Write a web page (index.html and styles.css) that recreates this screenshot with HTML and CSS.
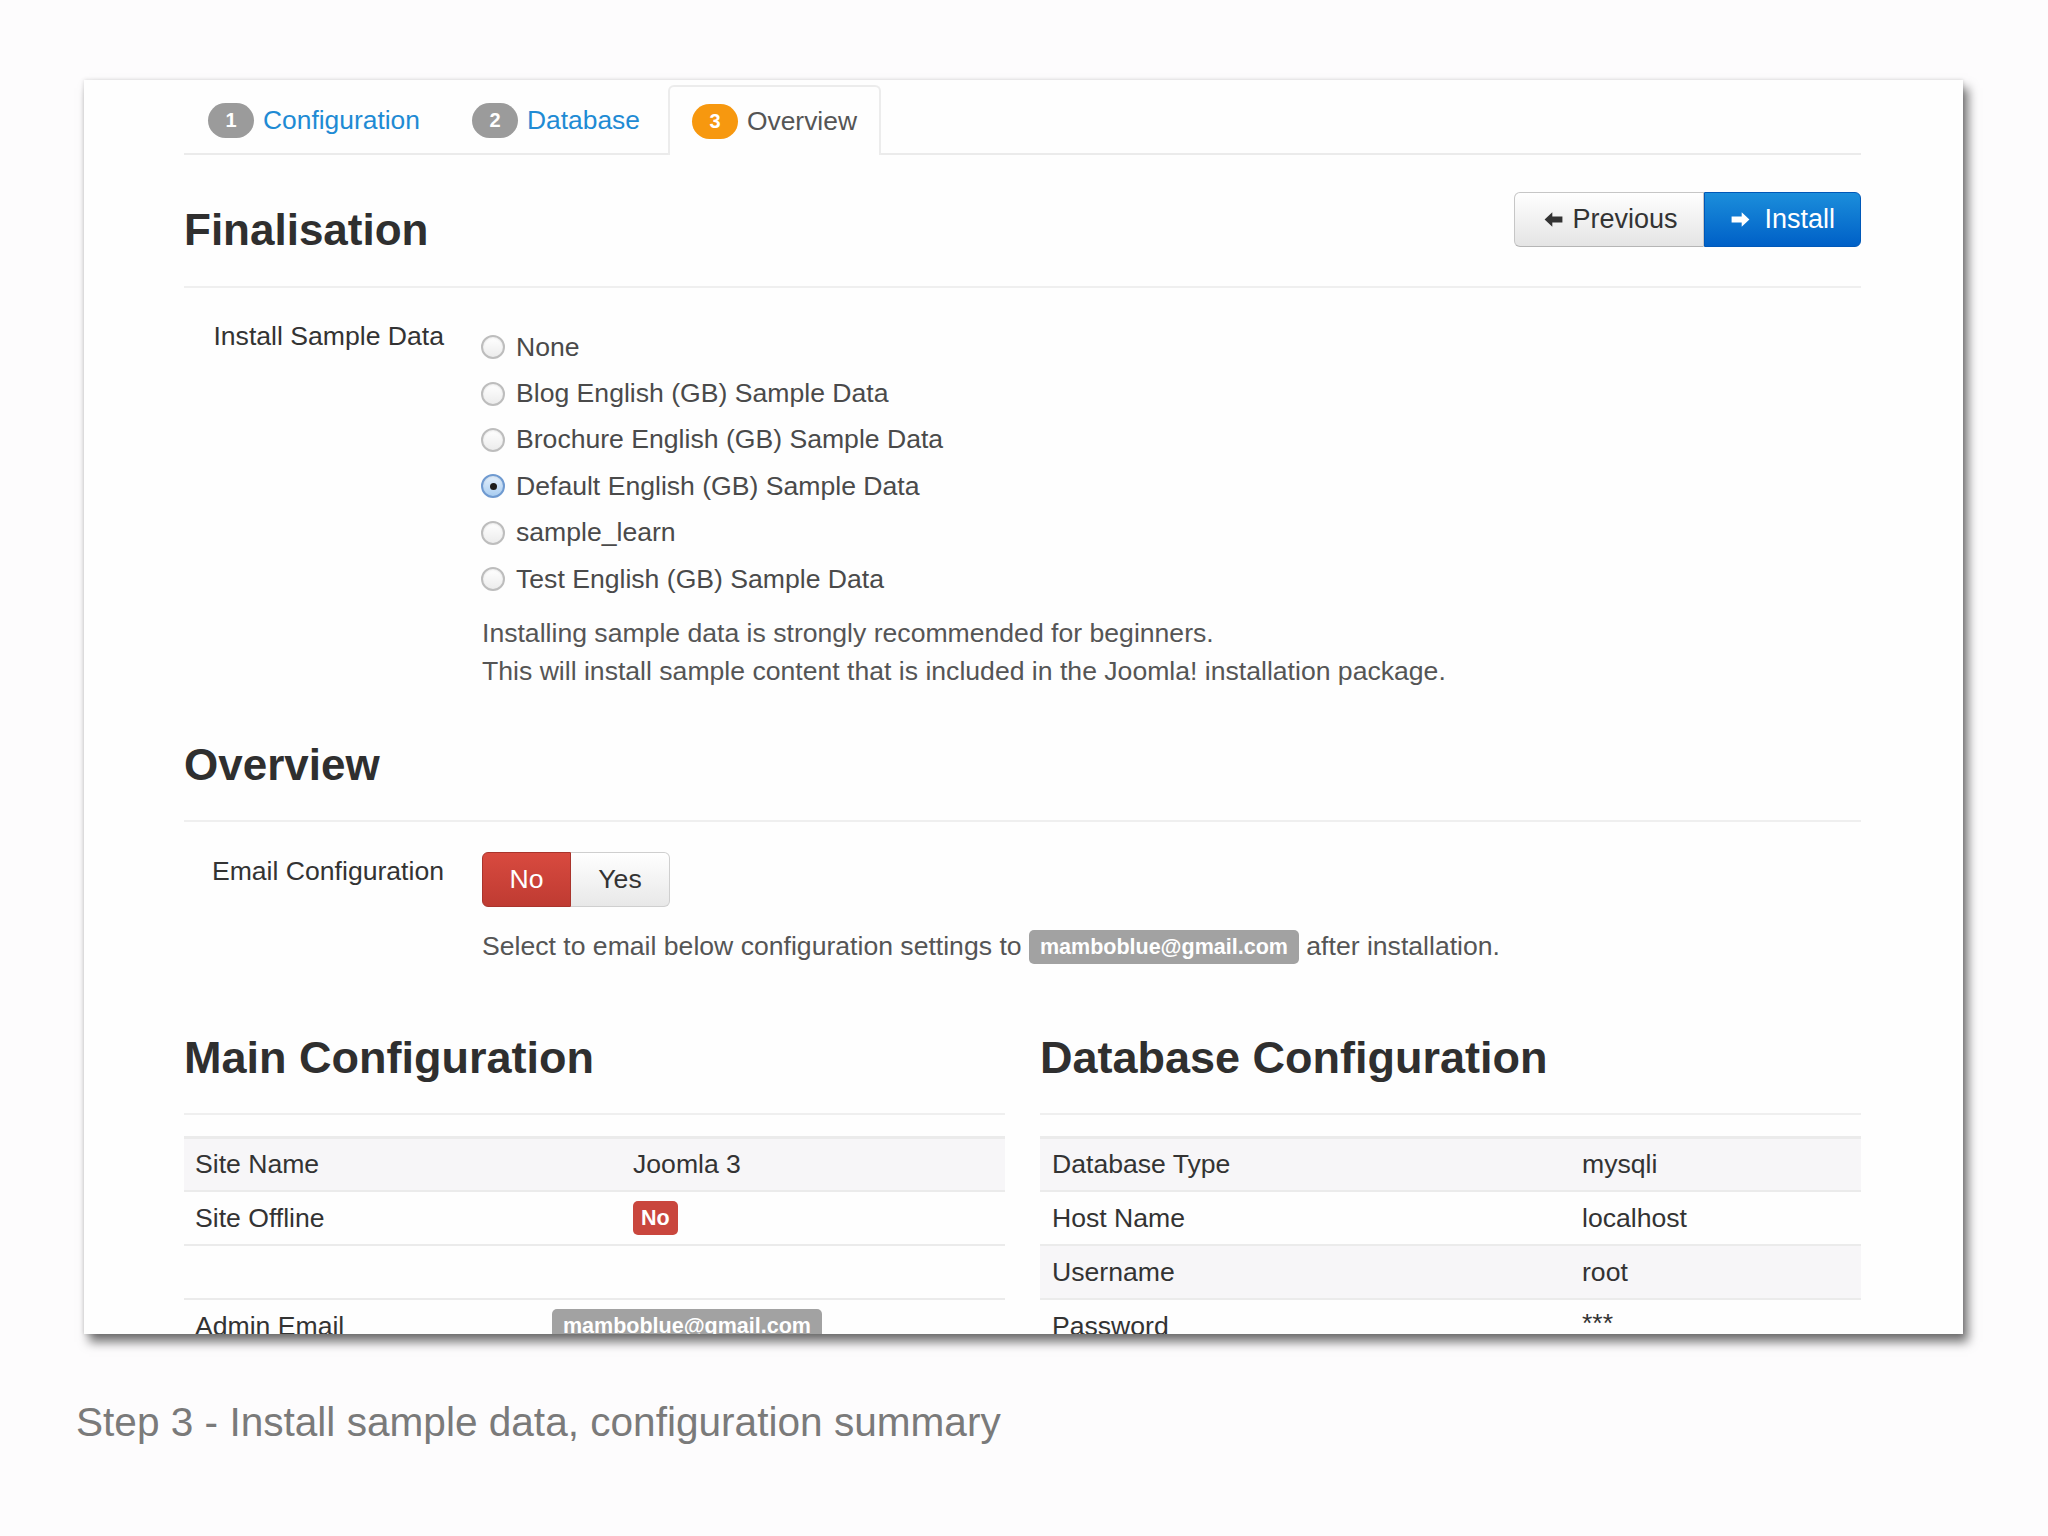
FILE: index.html
```html
<!DOCTYPE html>
<html lang="en">
<head>
<meta charset="utf-8">
<title>Joomla installation - Overview</title>
<link rel="stylesheet" href="styles.css">
</head>
<body>
<div class="shot">
  <div class="card">
    <ul class="tabs">
      <li class="tab"><span class="step-badge">1</span><span class="tab-link">Configuration</span></li>
      <li class="tab"><span class="step-badge">2</span><span class="tab-link">Database</span></li>
      <li class="tab tab-active"><span class="step-badge step-badge-warning">3</span><span class="tab-text">Overview</span></li>
    </ul>

    <div class="page-header">
      <h1 class="page-title">Finalisation</h1>
      <div class="btn-group">
        <button class="btn btn-default" type="button">
          <svg class="btn-icon" viewBox="0 0 16 16" aria-hidden="true"><path d="M0.5 8 L7 1.8 V5.4 H15.5 V10.6 H7 V14.2 Z" fill="#333"/></svg>
          <span>Previous</span>
        </button>
        <button class="btn btn-primary" type="button">
          <svg class="btn-icon" viewBox="0 0 16 16" aria-hidden="true"><path d="M15.5 8 L9 1.8 V5.4 H0.5 V10.6 H9 V14.2 Z" fill="#fff"/></svg>
          <span>Install</span>
        </button>
      </div>
    </div>

    <div class="form-row form-row-sample">
      <div class="control-label">Install Sample Data</div>
      <div class="controls">
        <label class="radio"><span class="radio-circle"></span>None</label>
        <label class="radio"><span class="radio-circle"></span>Blog English (GB) Sample Data</label>
        <label class="radio"><span class="radio-circle"></span>Brochure English (GB) Sample Data</label>
        <label class="radio"><span class="radio-circle radio-checked"></span>Default English (GB) Sample Data</label>
        <label class="radio"><span class="radio-circle"></span>sample_learn</label>
        <label class="radio"><span class="radio-circle"></span>Test English (GB) Sample Data</label>
        <p class="help help-sample">Installing sample data is strongly recommended for beginners.<br>This will install sample content that is included in the Joomla! installation package.</p>
      </div>
    </div>

    <h2 class="section-title section-overview">Overview</h2>

    <div class="form-row form-row-email">
      <div class="control-label">Email Configuration</div>
      <div class="controls">
        <div class="toggle">
          <span class="toggle-btn toggle-no">No</span><span class="toggle-btn toggle-yes">Yes</span>
        </div>
        <p class="help help-email">Select to email below configuration settings to <span class="tag tag-grey">mamboblue@gmail.com</span> after installation.</p>
      </div>
    </div>

    <div class="summary">
      <div class="summary-col">
        <h2 class="section-title">Main Configuration</h2>
        <div class="table table-main">
          <div class="tr tr-first tr-striped"><div class="td">Site Name</div><div class="td">Joomla 3</div></div>
          <div class="tr"><div class="td">Site Offline</div><div class="td"><span class="tag tag-red">No</span></div></div>
          <div class="tr"><div class="td"></div><div class="td"></div></div>
          <div class="tr tr-admin"><div class="td">Admin Email</div><div class="td"><span class="tag tag-grey">mamboblue@gmail.com</span></div></div>
        </div>
      </div>
      <div class="summary-col">
        <h2 class="section-title">Database Configuration</h2>
        <div class="table table-db">
          <div class="tr tr-first tr-striped"><div class="td">Database Type</div><div class="td">mysqli</div></div>
          <div class="tr"><div class="td">Host Name</div><div class="td">localhost</div></div>
          <div class="tr tr-striped"><div class="td">Username</div><div class="td">root</div></div>
          <div class="tr"><div class="td">Password</div><div class="td td-stars">***</div></div>
        </div>
      </div>
    </div>
  </div>

  <p class="caption">Step 3 - Install sample data, configuration summary</p>
</div>
</body>
</html>
```

FILE: styles.css
```css
* {
  box-sizing: border-box;
}

html, body {
  margin: 0;
  padding: 0;
  background: #fdfcfd;
}

body {
  font-family: "Liberation Sans", Arial, Helvetica, sans-serif;
  font-size: 26.6px;
  color: #333;
  width: 2048px;
  height: 1536px;
  overflow: hidden;
}

.shot {
  padding: 80px 0 0 84px;
}

/* Card / window */
.card {
  width: 1879px;
  height: 1254px;
  overflow: hidden;
  background: #fefefe;
  padding: 5px 102px 0 100px;
  box-shadow: 0 0 4px rgba(0, 0, 0, 0.14), 5px 8px 10px rgba(0, 0, 0, 0.55);
}

/* Tabs */
.tabs {
  list-style: none;
  margin: 0;
  padding: 0;
  display: flex;
  border-bottom: 2px solid #ebebeb;
}

.tab {
  display: flex;
  align-items: center;
  height: 68px;
  padding: 0 22px;
  margin-right: 4px;
  margin-bottom: -2px;
  border: 2px solid transparent;
  border-bottom: none;
  border-radius: 6px 6px 0 0;
  font-size: 26.4px;
}

.tab-active {
  background: #fefefe;
  border-color: #ececec;
  height: 70px;
}

.step-badge {
  display: inline-flex;
  align-items: center;
  justify-content: center;
  min-width: 46px;
  height: 35px;
  border-radius: 18px;
  background: #9b9b9b;
  color: #fff;
  font-size: 20px;
  font-weight: bold;
  margin-right: 9px;
}

.step-badge-warning {
  background: #f7980f;
}

.tab-link {
  color: #1f8bd4;
}

.tab-text {
  color: #555;
}

/* Page header */
.page-header {
  display: flex;
  justify-content: space-between;
  align-items: flex-start;
  padding: 37px 0 30px;
  border-bottom: 2px solid #efefef;
}

.page-title {
  margin: 12px 0 0;
  font-size: 44px;
  line-height: 52px;
  font-weight: bold;
  color: #2f2f2f;
}

.btn-group {
  display: flex;
}

.btn {
  display: inline-flex;
  align-items: center;
  gap: 9px;
  height: 55px;
  padding: 0 27px;
  font-family: inherit;
  font-size: 27px;
  border: 1px solid #c6c6c6;
  cursor: pointer;
}

.btn-icon {
  width: 19px;
  height: 19px;
}

.btn-default {
  color: #333;
  background: linear-gradient(#ffffff, #e4e4e4);
  border-bottom-color: #b5b5b5;
  border-radius: 6px 0 0 6px;
  padding: 0 26px 0 29px;
}

.btn-primary {
  color: #fff;
  background: linear-gradient(#1b8edb, #0060c7);
  border-color: #0058b8;
  border-radius: 0 6px 6px 0;
  padding: 0 25px 0 26px;
  gap: 14px;
}

/* Form rows */
.form-row {
  display: flex;
  align-items: flex-start;
}

.form-row-sample {
  margin-top: 29px;
}

.form-row-email {
  margin-top: 30px;
}

.control-label {
  width: 260px;
  flex: none;
  text-align: right;
  line-height: 38px;
  color: #333;
}

.controls {
  margin-left: 38px;
}

.form-row-sample .controls {
  padding-top: 7px;
}

.radio {
  display: flex;
  align-items: center;
  height: 46.4px;
  color: #4a4a4a;
}

.radio-circle {
  position: relative;
  flex: none;
  width: 24px;
  height: 24px;
  margin-left: -1px;
  margin-right: 11px;
  border-radius: 50%;
  border: 2px solid #bdbdbd;
  background: linear-gradient(#ffffff, #ececec);
  box-shadow: inset 0 1px 2px rgba(0, 0, 0, 0.08);
}

.radio-checked {
  border-color: #6f9ad0;
  background: linear-gradient(#e4f0fc, #a9cdf1);
}

.radio-checked::after {
  content: "";
  position: absolute;
  left: 50%;
  top: 50%;
  width: 7px;
  height: 7px;
  margin: -3.5px 0 0 -3.5px;
  border-radius: 50%;
  background: #1c1c1c;
}

.help {
  margin: 0;
  line-height: 38px;
  color: #555;
}

.help-sample {
  margin-top: 12px;
}

.help-email {
  margin-top: 20px;
}

/* Section titles */
.section-title {
  margin: 0;
  font-size: 45px;
  line-height: 52px;
  font-weight: bold;
  color: #2f2f2f;
  padding-bottom: 29px;
  border-bottom: 2px solid #efefef;
}

.section-overview {
  margin-top: 49px;
  font-size: 44px;
}

/* Toggle */
.toggle {
  display: flex;
  height: 55px;
}

.toggle-btn {
  display: flex;
  align-items: center;
  justify-content: center;
  height: 55px;
  font-size: 26.6px;
}

.toggle-no {
  width: 89px;
  color: #fff;
  background: linear-gradient(#d84a3f, #bf3b32);
  border: 1px solid #a9342c;
  border-radius: 6px 0 0 6px;
}

.toggle-yes {
  width: 99px;
  color: #333;
  background: linear-gradient(#ffffff, #e8e8e8);
  border: 1px solid #cfcfcf;
  border-left: none;
  border-radius: 0 6px 6px 0;
}

/* Tags */
.tag {
  display: inline-block;
  height: 34px;
  line-height: 34px;
  padding: 0 11px;
  border-radius: 5px;
  color: #fff;
  font-weight: bold;
  font-size: 21.5px;
  vertical-align: 1px;
}

.tag-grey {
  background: #a2a2a2;
}

.tag-red {
  background: #c9463d;
  padding: 0 8px;
}

/* Summary */
.summary {
  display: grid;
  grid-template-columns: 1fr 1fr;
  column-gap: 35px;
  margin-top: 67px;
}

.table {
  margin-top: 21px;
}

.tr {
  display: grid;
  height: 54px;
  align-items: center;
  border-top: 2px solid #ebebeb;
  color: #333;
}

.tr-first {
  border-top-width: 3px;
}

.tr-striped {
  background: #f7f6f8;
}

.table-main .tr {
  grid-template-columns: 438px 1fr;
}

.table-main .tr-admin {
  grid-template-columns: 357px 1fr;
}

.table-db .tr {
  grid-template-columns: 530px 1fr;
}

.td {
  padding-left: 11px;
}

.table-db .td {
  padding-left: 12px;
}

.td-stars {
  line-height: 1;
  margin-top: -6px;
}

/* Caption */
.caption {
  margin: 64px 0 0 -8px;
  font-size: 40.6px;
  line-height: 48px;
  color: #7a7a7a;
}
```
